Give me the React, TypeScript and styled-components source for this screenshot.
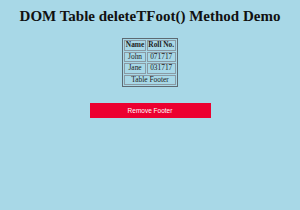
import React from 'react';
import styled, { createGlobalStyle } from 'styled-components';

const GlobalStyle = createGlobalStyle`
    html, body {
        margin: 0;
        padding: 0;
        background-color: #a8d8e7;
    }
    body {
        font-family: "Liberation Serif", "Times New Roman", serif;
    }
`;

const Page = styled.main`
    width: 300px;
    height: 210px;
    display: flex;
    flex-direction: column;
    align-items: center;
    padding-top: 9px;
    box-sizing: border-box;
`;

const Title = styled.h1`
    margin: 0;
    font-size: 15px;
    font-weight: bold;
    color: #111;
    line-height: 15px;
`;

const Table = styled.table`
    margin-top: 14px;
    border: 1px solid #5d6a72;
    border-spacing: 1px;
    font-size: 7.4px;
    color: #222;
`;

const Cell = styled.td<{ $head?: boolean }>`
    border: 1px solid #8a9aa4;
    padding: 0 0.5px;
    height: 8.5px;
    line-height: 8.5px;
    text-align: center;
    font-weight: ${p => (p.$head ? 'bold' : 'normal')};
`;

const Button = styled.button`
    margin-top: 16px;
    width: 121px;
    height: 15px;
    border: none;
    background-color: #ec0030;
    color: #fff;
    font-family: "Liberation Sans", Arial, sans-serif;
    font-size: 6.5px;
    padding: 0;
`;

const rows = [
    { name: 'John', roll: '071717' },
    { name: 'Jane', roll: '031717' },
];

export default function App() {
    return (
        <>
            <GlobalStyle />
            <Page>
                <Title>DOM Table deleteTFoot() Method Demo</Title>
                <Table>
                    <thead>
                        <tr>
                            <Cell as="th" $head>Name</Cell>
                            <Cell as="th" $head>Roll No.</Cell>
                        </tr>
                    </thead>
                    <tbody>
                        {rows.map(r => (
                            <tr key={r.name}>
                                <Cell>{r.name}</Cell>
                                <Cell>{r.roll}</Cell>
                            </tr>
                        ))}
                    </tbody>
                    <tfoot>
                        <tr>
                            <Cell colSpan={2}>Table Footer</Cell>
                        </tr>
                    </tfoot>
                </Table>
                <Button>Remove Footer</Button>
            </Page>
        </>
    );
}
